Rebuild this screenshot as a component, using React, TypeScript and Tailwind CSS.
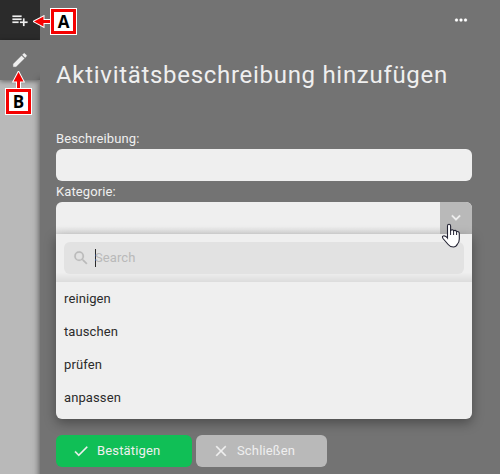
import type { ReactNode } from "react";

function Icon({ d, className }: { d: string; className: string }) {
  return (
    <svg viewBox="0 0 24 24" fill="currentColor" stroke="currentColor" strokeWidth="0.25" className={className}>
      <path d={d} />
    </svg>
  );
}

const icons = {
  playlistAdd: "M14 10H2v2h12v-2zm0-4H2v2h12V6zm4 8v-4h-2v4h-4v2h4v4h2v-4h4v-2h-4zM2 16h8v-2H2v2z",
  edit: "M3 17.25V21h3.75L17.81 9.94l-3.75-3.75L3 17.25zM20.71 7.04a1 1 0 0 0 0-1.41l-2.34-2.34a1 1 0 0 0-1.41 0l-1.83 1.83 3.75 3.75 1.83-1.83z",
  more: "M6 10a2 2 0 1 0 0 4 2 2 0 0 0 0-4zm12 0a2 2 0 1 0 0 4 2 2 0 0 0 0-4zm-6 0a2 2 0 1 0 0 4 2 2 0 0 0 0-4z",
  search: "M15.5 14h-.79l-.28-.27A6.47 6.47 0 0 0 16 9.5 6.5 6.5 0 1 0 9.5 16c1.61 0 3.09-.59 4.23-1.57l.27.28v.79l5 4.99L20.49 19l-4.99-5zm-6 0a4.5 4.5 0 1 1 0-9 4.5 4.5 0 0 1 0 9z",
  check: "M9 16.17 4.83 12l-1.42 1.41L9 19 21 7l-1.41-1.41z",
  close: "M19 6.41 17.59 5 12 10.59 6.41 5 5 6.41 10.59 12 5 17.59 6.41 19 12 13.41 17.59 19 19 17.59 13.41 12z",
  chevron: "M7.41 7.84 12 12.42l4.59-4.58L18.2 9.4 12 15.6 5.8 9.4z",
};

function Marker({ children, className }: { children: ReactNode; className: string }) {
  return (
    <div
      className={`absolute z-20 flex h-[25px] w-[25px] items-center justify-center border-[3px] border-[#f50000] bg-white font-['Open_Sans',sans-serif] text-[17px] leading-none font-bold tracking-normal text-black outline outline-1 outline-white ${className}`}
    >
      {children}
    </div>
  );
}

export default function App() {
  return (
    <div className="relative flex h-[474px] w-[500px] overflow-hidden bg-[#b9b9b9] font-[Roboto,sans-serif] text-[13px] leading-4 tracking-[0.1px] text-[#efefef]">
      <aside className="w-10 shrink-0">
        <div className="flex h-10 items-center justify-center bg-[#2b2b2b]">
          <Icon d={icons.playlistAdd} className="h-[18px] w-[18px]" />
        </div>
        <div className="flex h-10 items-center justify-center bg-[#737373] shadow-[0_1px_5px_rgba(0,0,0,0.5)]">
          <Icon d={icons.edit} className="h-[18px] w-[18px]" />
        </div>
      </aside>

      <main className="flex w-[460px] flex-col bg-[#737373] pr-7 pl-4 shadow-[0_80px_7px_rgba(0,0,0,0.65)]">
        <div className="flex h-10 items-center justify-end">
          <Icon d={icons.more} className="mr-[2px] h-[18px] w-[18px] text-white" />
        </div>
        <h1 className="mt-[19px] h-8 text-[24px] leading-8 tracking-[0.7px] whitespace-nowrap">
          Aktivitätsbeschreibung hinzufügen
        </h1>
        <label className="mt-10 h-[18px]">Beschreibung:</label>
        <div className="h-8 rounded-md bg-[#efefef]" />
        <label className="mt-[3px] h-[18px]">Kategorie:</label>
        <div className="flex h-8 justify-end overflow-hidden rounded-t-md bg-[#efefef]">
          <div className="flex-1 bg-linear-to-b from-transparent from-75% to-black/8" />
          <div className="flex w-8 items-center justify-center bg-[#b9b9b9]">
            <Icon d={icons.chevron} className="h-[18px] w-[18px]" />
          </div>
        </div>
        <div className="h-[185px] rounded-b-md bg-[#efefef] text-[#2b2b2b] shadow-[0_4px_12px_rgba(0,0,0,0.35)]">
          <div className="h-12 bg-linear-to-b from-transparent from-80% to-black/8 p-2">
            <div className="flex h-8 items-center rounded-md bg-[#e2e2e2] pl-2 text-[#b9b9b9]">
              <Icon d={icons.search} className="h-[18px] w-[18px]" />
              <span className="ml-[5px] h-[18px] w-px bg-[#2b2b2b]" />
              <span className="-ml-px">Search</span>
            </div>
          </div>
          <ul>
            {["reinigen", "tauschen", "prüfen", "anpassen"].map((item) => (
              <li key={item} className="flex h-[33px] items-center pl-2">
                {item}
              </li>
            ))}
          </ul>
        </div>
        <div className="mt-4 flex gap-1">
          <button className="flex h-8 w-[136px] items-center rounded-md bg-[#10bf56] pl-4 tracking-[0.15px]">
            <Icon d={icons.check} className="mr-[7px] h-[18px] w-[18px]" />
            Bestätigen
          </button>
          <button className="flex h-8 w-[131px] items-center rounded-md bg-[#b9b9b9] pl-4 tracking-[0.15px]">
            <Icon d={icons.close} className="mr-[7px] h-[18px] w-[18px]" />
            Schließen
          </button>
        </div>
      </main>

      <Marker className="top-[9px] left-[51px]">A</Marker>
      <Marker className="top-[89px] left-[6px]">B</Marker>
      <svg viewBox="0 0 20 14" className="absolute top-[15px] left-[33px] z-10 h-[14px] w-5">
        <path d="M1 6.5 10.5 1.5v3.5H20v3h-9.5v3.5z" fill="#f50000" stroke="#fff" strokeWidth="2" paintOrder="stroke" />
      </svg>
      <svg viewBox="0 0 14 20" className="absolute top-[71px] left-[12px] z-10 h-5 w-[14px]">
        <path d="M6.5 1 1.5 10.5h3.5V20h3v-9.5h3.5z" fill="#f50000" stroke="#fff" strokeWidth="2" paintOrder="stroke" />
      </svg>
      <svg viewBox="0 0 20 25" className="absolute top-[223px] left-[441px] z-20 h-[25px] w-5">
        <path
          d="M6.5 15V3Q6.5 1.2 8 1.2T9.6 3V7.5Q11.5 6 12.6 7.8Q14.6 6.8 15.6 8.6Q18.3 8 18.3 11V16Q18.3 19 16.5 21Q15 24 12.5 24Q9 24 7.2 21.5L2 15.5Q0.5 13 3 12.7Q5 13 6.5 15Z"
          fill="#fff"
          stroke="#232333"
          strokeWidth="1.1"
        />
        <path d="M9.6 7v5M12.6 8v4M15.6 9v3" fill="none" stroke="#232333" />
      </svg>
    </div>
  );
}
